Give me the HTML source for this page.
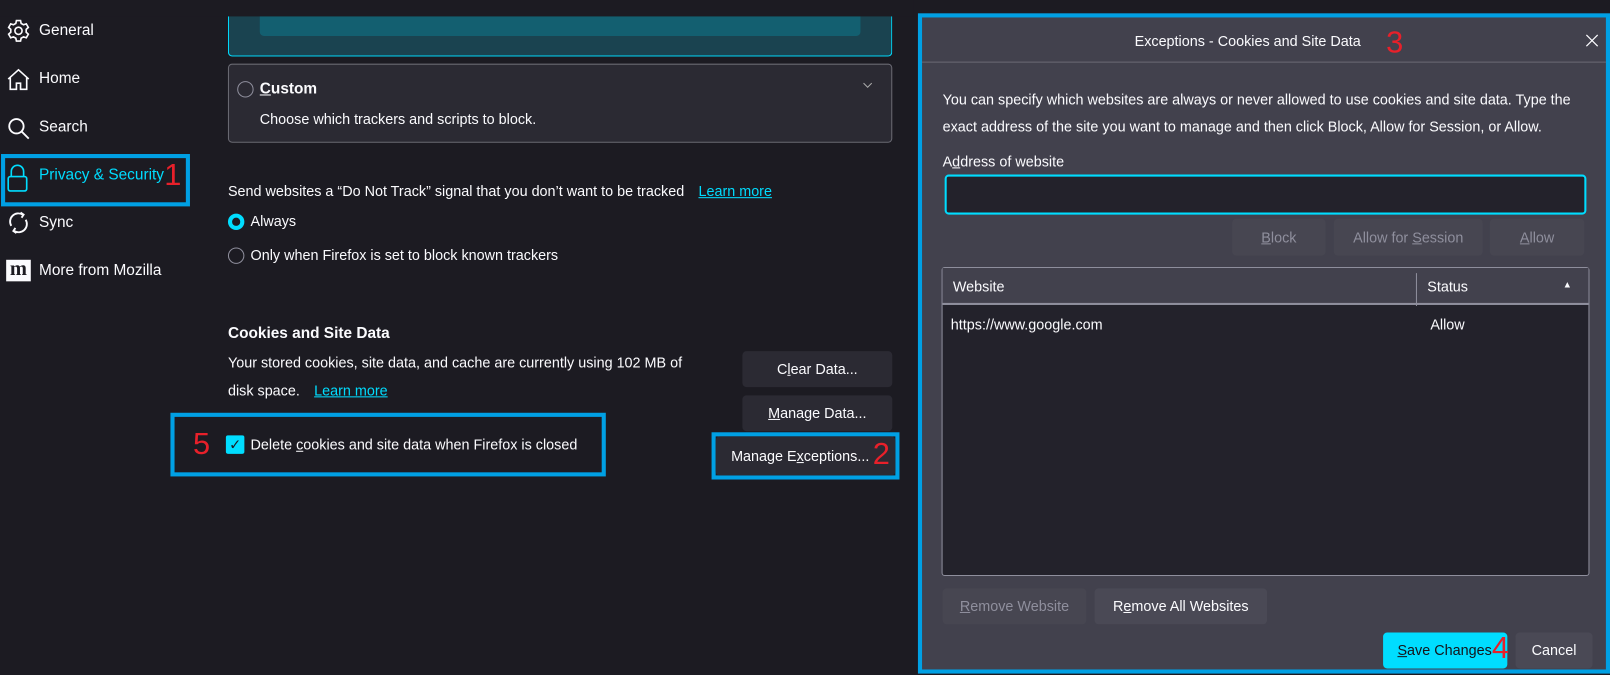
<!DOCTYPE html>
<html><head><meta charset="utf-8"><style>
*{box-sizing:border-box;margin:0;padding:0}
body{width:1610px;height:675px;background:#1c1b22;font-family:"Liberation Sans",sans-serif;color:#fbfbfe;position:relative;overflow:hidden;font-size:14px}
#w{position:absolute;left:0;top:0;width:1568px;height:657px;transform:scale(1.02679);transform-origin:0 0}
.a{position:absolute;white-space:nowrap}
.nav{font-size:15px;color:#fbfbfe}
.btn{position:absolute;background:#2b2a33;border-radius:4px;text-align:center;font-size:14px;color:#fbfbfe}
.dbtn{position:absolute;background:#4a4955;border-radius:4px;text-align:center;font-size:14px;color:#fbfbfe}
.dis{color:#8f8f9d;background:#474651}
.red{color:#e8202a;font-size:30px;position:absolute;line-height:1}
.blue{position:absolute;border:4px solid #00a0e4}
u{text-decoration:underline}
</style></head><body><div id="w">
<!-- sidebar -->
<svg class="a" style="left:6px;top:18px" width="24" height="24" viewBox="0 0 24 24" fill="none" stroke="#fbfbfe" stroke-width="1.6"><circle cx="12" cy="12" r="3.5"/><path d="M10 2h4l.6 2.8 2.3 1.3 2.7-.9 2 3.5-2.1 1.9v2.8l2.1 1.9-2 3.5-2.7-.9-2.3 1.3L14 22h-4l-.6-2.8-2.3-1.3-2.7.9-2-3.5 2.1-1.9v-2.8L2.4 8.7l2-3.5 2.7.9 2.3-1.3z"/></svg>
<div class="a nav" style="left:38px;top:21px">General</div>
<svg class="a" style="left:6px;top:66px" width="24" height="24" viewBox="0 0 24 24" fill="none" stroke="#fbfbfe" stroke-width="1.6"><path d="M2 11L12 2l10 9M4 9v12h6v-6h4v6h6V9"/></svg>
<div class="a nav" style="left:38px;top:68px">Home</div>
<svg class="a" style="left:6px;top:113px" width="24" height="24" viewBox="0 0 24 24" fill="none" stroke="#fbfbfe" stroke-width="1.8"><circle cx="10" cy="10" r="7"/><path d="M15 15l7 7"/></svg>
<div class="a nav" style="left:38px;top:115px">Search</div>
<div class="blue" style="left:1px;top:150px;width:184px;height:51px"></div>
<svg class="a" style="left:6px;top:160px" width="22" height="28" viewBox="0 0 22 28" fill="none" stroke="#00ddff" stroke-width="1.6"><path d="M5 12V7a6 6 0 0 1 12 0v5"/><rect x="2" y="12" width="18" height="14" rx="2"/></svg>
<div class="a nav" style="left:38px;top:162px;color:#00ddff">Privacy &amp; Security</div>
<div class="red" style="left:160px;top:156px">1</div>
<svg class="a" style="left:7px;top:205px" width="22" height="24" viewBox="0 0 22 24" fill="none" stroke="#fbfbfe" stroke-width="1.8"><path d="M4 15a8 8 0 0 1 11-11M18 9a8 8 0 0 1-11 11"/><path d="M13 2l3 2-2 3M9 22l-3-2 2-3"/></svg>
<div class="a nav" style="left:38px;top:208px">Sync</div>
<div class="a" style="left:6px;top:253px;width:24px;height:21px;background:#fbfbfe;color:#1c1b22;font-weight:bold;font-size:20px;line-height:19px;text-align:center;font-family:'Liberation Serif',serif">m</div>
<div class="a nav" style="left:38px;top:255px">More from Mozilla</div>
<!-- middle -->
<div class="a" style="left:222px;top:0;width:647px;height:55px;background:#1a4350;border:1px solid #00ddff;border-top:none;border-radius:0 0 4px 4px"></div>
<div class="a" style="left:253px;top:0;width:585px;height:35px;background:#135f70;border-radius:0 0 4px 4px"></div>
<div class="a" style="left:0;top:0;width:890px;height:16px;background:#1c1b22"></div>
<div class="a" style="left:222px;top:62px;width:647px;height:77px;background:#2b2a33;border:1px solid #6a6a73;border-radius:4px"></div>
<div class="a" style="left:231px;top:79px;width:16px;height:16px;border:1px solid #8f8f9d;border-radius:50%"></div>
<div class="a" style="left:253px;top:78px;font-weight:bold;font-size:15px"><u>C</u>ustom</div>
<svg class="a" style="left:840px;top:80px" width="10" height="6" viewBox="0 0 10 6" fill="none" stroke="#aaa" stroke-width="1"><path d="M1 1l4 4 4-4"/></svg>
<div class="a" style="left:253px;top:108px">Choose which trackers and scripts to block.</div>
<div class="a" style="left:222px;top:178px">Send websites a “Do Not Track” signal that you don’t want to be tracked <span style="color:#00ddff;text-decoration:underline;margin-left:10px">Learn more</span></div>
<div class="a" style="left:222px;top:208px;width:16px;height:16px;border:4px solid #00ddff;border-radius:50%;background:#1c1b22"></div>
<div class="a" style="left:244px;top:207px">Always</div>
<div class="a" style="left:222px;top:241px;width:16px;height:16px;border:1px solid #8f8f9d;border-radius:50%"></div>
<div class="a" style="left:244px;top:240px">Only when Firefox is set to block known trackers</div>
<div class="a" style="left:222px;top:316px;font-weight:bold;font-size:15px">Cookies and Site Data</div>
<div class="a" style="left:222px;top:345px">Your stored cookies, site data, and cache are currently using 102 MB of</div>
<div class="a" style="left:222px;top:372px">disk space. <span style="color:#00ddff;text-decoration:underline;margin-left:10px">Learn more</span></div>
<div class="blue" style="left:166px;top:402px;width:424px;height:62px"></div>
<div class="red" style="left:188px;top:418px">5</div>
<div class="a" style="left:220px;top:424px;width:18px;height:18px;background:#00ddff;border-radius:2px;color:#1c1b22;font-size:14px;line-height:18px;text-align:center">✓</div>
<div class="a" style="left:244px;top:425px">Delete <u>c</u>ookies and site data when Firefox is closed</div>
<div class="btn" style="left:723px;top:342px;width:146px;height:35px;line-height:35px">C<u>l</u>ear Data...</div>
<div class="btn" style="left:723px;top:385px;width:146px;height:35px;line-height:35px"><u>M</u>anage Data...</div>
<div class="blue" style="left:693px;top:421px;width:183px;height:46px"></div>
<div class="btn" style="left:697px;top:425px;width:175px;height:38px;line-height:38px;text-align:left;padding-left:15px">Manage E<u>x</u>ceptions...</div>
<div class="red" style="left:850px;top:428px">2</div>
<!-- dialog -->
<div class="a" style="left:894px;top:13px;width:674px;height:643px;border:4px solid #00a0e4;background:#42414d"></div>
<div class="a" style="left:898px;top:60px;width:666px;height:1px;background:#6a6a73"></div>
<div class="a" style="left:1105px;top:32px;font-size:14px">Exceptions - Cookies and Site Data</div>
<div class="red" style="left:1350px;top:27px">3</div>
<svg class="a" style="left:1544px;top:33px" width="13" height="13" viewBox="0 0 13 13" fill="none" stroke="#fbfbfe" stroke-width="1.2"><path d="M1 1l11 11M12 1L1 12"/></svg>
<div class="a" style="left:918px;top:89px">You can specify which websites are always or never allowed to use cookies and site data. Type the</div>
<div class="a" style="left:918px;top:115px">exact address of the site you want to manage and then click Block, Allow for Session, or Allow.</div>
<div class="a" style="left:918px;top:149px">A<u>d</u>dress of website</div>
<div class="a" style="left:920px;top:170px;width:625px;height:39px;background:#23222b;border:2px solid #00ddff;border-radius:4px"></div>
<div class="dbtn dis" style="left:1200px;top:213px;width:91px;height:36px;line-height:36px"><u>B</u>lock</div>
<div class="dbtn dis" style="left:1299px;top:213px;width:145px;height:36px;line-height:36px">Allow for <u>S</u>ession</div>
<div class="dbtn dis" style="left:1451px;top:213px;width:92px;height:36px;line-height:36px"><u>A</u>llow</div>
<div class="a" style="left:917px;top:260px;width:631px;height:301px;background:#23222b;border:1px solid #8f8f9d;border-radius:3px"></div>
<div class="a" style="left:918px;top:261px;width:629px;height:36px;background:#42414d;border-bottom:2px solid #8f8f9d"></div>
<div class="a" style="left:1379px;top:266px;width:1px;height:32px;background:#8f8f9d"></div>
<div class="a" style="left:928px;top:271px">Website</div>
<div class="a" style="left:1390px;top:271px">Status</div>
<div class="a" style="left:1522px;top:272px;font-size:9px">▲</div>
<div class="a" style="left:926px;top:308px">https://www.google.com</div>
<div class="a" style="left:1393px;top:308px">Allow</div>
<div class="dbtn dis" style="left:918px;top:573px;width:140px;height:35px;line-height:35px"><u>R</u>emove Website</div>
<div class="dbtn" style="left:1066px;top:573px;width:168px;height:35px;line-height:35px">R<u>e</u>move All Websites</div>
<div class="a" style="left:1347px;top:616px;width:121px;height:35px;background:#00ddff;border-radius:4px;color:#15141a;line-height:35px;padding-left:14px"><u>S</u>ave Changes</div>
<div class="red" style="left:1453px;top:617px">4</div>
<div class="dbtn" style="left:1476px;top:616px;width:75px;height:35px;line-height:35px">Cancel</div>
</div></body></html>
